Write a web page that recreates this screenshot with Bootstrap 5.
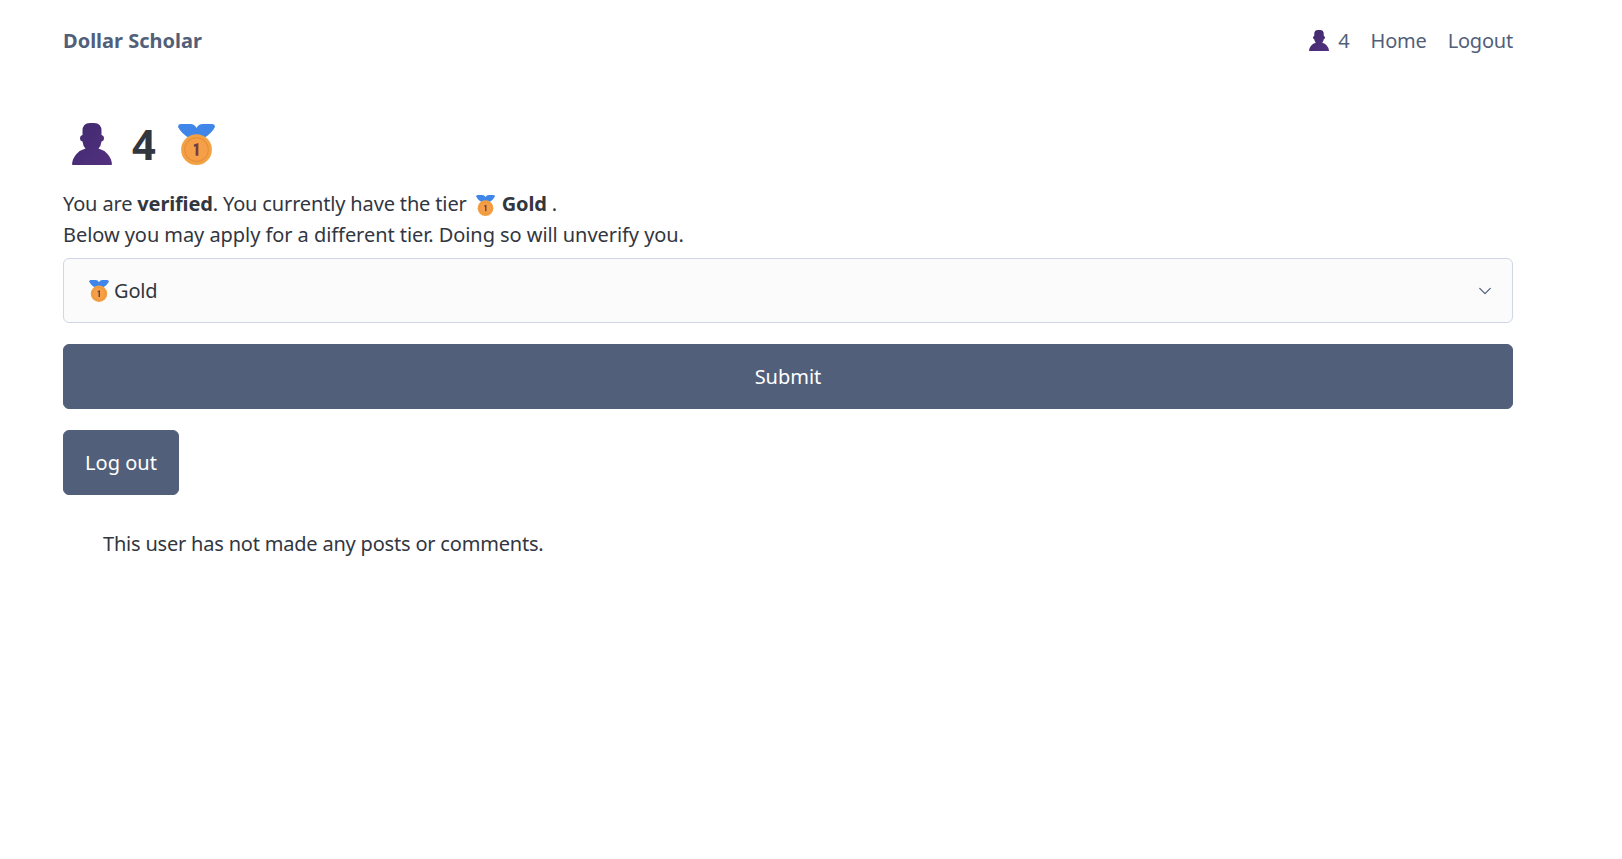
<!DOCTYPE html>
<html lang="en">

<head>
    <meta charset="UTF-8">
    <meta name="viewport" content="width=device-width, initial-scale=1">
    <title>Dollar Scholar</title>
    <link href="https://cdn.jsdelivr.net/npm/bootstrap@5.3.3/dist/css/bootstrap.min.css" rel="stylesheet">
    <style>
        body {
            font-family: "Noto Sans", "Liberation Sans", sans-serif;
            font-size: 20px;
            line-height: 31.2px;
            letter-spacing: -0.15px;
            color: #32363f;
        }

        .svg-defs {
            position: absolute;
        }

        .page-wrap {
            width: 1450px;
            margin-left: 63px;
        }

        .top-bar {
            height: 82px;
        }

        .brand-link {
            font-weight: 700;
            letter-spacing: 0;
            color: #525f7a;
            text-decoration: none;
        }

        .top-link {
            color: #525f7a;
            text-decoration: none;
            letter-spacing: -0.2px;
        }

        .top-links {
            gap: 21px;
        }

        .bust-count {
            gap: 9px;
        }

        .user-title {
            font-size: 41.6px;
            font-weight: 700;
            line-height: 50px;
            letter-spacing: 0;
            margin-top: 37px;
            margin-bottom: 19px;
        }

        .title-bust {
            margin-left: 9px;
            margin-right: 20px;
        }

        .title-medal {
            margin-left: 22px;
        }

        .inline-medal {
            margin: 0 2px 0 4px;
            vertical-align: -5px;
        }

        .apply-line {
            letter-spacing: -0.06px;
        }

        .tier-select {
            height: 65px;
            font-size: 20px;
            color: #32363f;
            background-color: #fbfbfb;
            border-color: #cfd6e6;
            border-radius: 6px;
            padding: 0 22px 0 25px;
            display: flex;
            align-items: center;
            gap: 5px;
            background-image: url("data:image/svg+xml,%3csvg xmlns='http://www.w3.org/2000/svg' viewBox='0 0 16 16'%3e%3cpath fill='none' stroke='%23525f7a' stroke-linecap='round' stroke-linejoin='round' stroke-width='1.5' d='m2 5 6 6 6-6'/%3e%3c/svg%3e");
            background-position: right 20px center;
            background-size: 14px 14px;
        }

        .slate-btn {
            background-color: #525f7a;
            border-color: #525f7a;
            color: #fff;
            font-size: 20px;
            height: 65px;
            border-radius: 6px;
            margin-top: 21px;
        }

        .logout-btn {
            width: 116px;
        }

        .no-posts {
            padding-left: 40px;
            margin-top: 33px;
            letter-spacing: -0.2px;
        }
    </style>
</head>

<body>

    <svg width="0" height="0" class="svg-defs">
        <defs>
            <linearGradient id="bustFill" x1="0" y1="0" x2="1" y2="1">
                <stop offset="0" stop-color="#3f2a6e" />
                <stop offset="1" stop-color="#53307f" />
            </linearGradient>
        </defs>
        <symbol id="bust" viewBox="0 0 40 42">
            <path fill="url(#bustFill)"
                d="M10.5 8 Q10.5 0 18 0 H22 Q29.5 0 29.5 8 V12 Q32 12.5 32 15 Q32 18 29.5 18.5 Q29 23 26.5 25.5 Q32 27 35.5 31 Q39.5 35.5 40 41 Q40 42 39 42 H1 Q0 42 0 41 Q0.5 35.5 4.5 31 Q8 27 13.5 25.5 Q11 23 10.5 18.5 Q8 18 8 15 Q8 12.5 10.5 12 Z" />
        </symbol>
        <symbol id="medal" viewBox="0 0 36 40">
            <path fill="#3f86e8"
                d="M3 0 H12 Q16 0 18 4 Q20 0 24 0 H33 Q36 0 36 3 Q33 9 25 14 L18 13 L11 14 Q3 9 0 3 Q0 0 3 0 Z" />
            <circle cx="18" cy="25" r="15" fill="#f2a144" />
            <circle cx="18" cy="25" r="11.5" fill="#f59f48" stroke="#e58f35" stroke-width="1" />
            <path fill="#6e4040" d="M15.5 20 L19.8 18.5 V31 H17.2 V21.8 L15.5 22.4 Z" />
        </symbol>
    </svg>

    <div class="page-wrap">
        <nav class="top-bar d-flex justify-content-between align-items-center">
            <a href="#" class="brand-link">Dollar Scholar</a>
            <div class="top-links d-flex align-items-center">
                <a href="#" class="top-link bust-count d-flex align-items-center">
                    <svg width="20" height="21">
                        <use href="#bust" />
                    </svg>
                    <span>4</span>
                </a>
                <a href="#" class="top-link">Home</a>
                <a href="#" class="top-link">Logout</a>
            </div>
        </nav>

        <h1 class="user-title d-flex align-items-center">
            <svg width="40" height="42" class="title-bust">
                <use href="#bust" />
            </svg>
            <span>4</span>
            <svg width="37" height="41" class="title-medal">
                <use href="#medal" />
            </svg>
        </h1>

        <div>You are <b>verified</b>. You currently have the tier
            <svg width="19" height="21" class="inline-medal">
                <use href="#medal" />
            </svg>
            <b>Gold</b> .
        </div>
        <div class="apply-line mb-2">Below you may apply for a different tier. Doing so will unverify you.</div>

        <div class="form-select tier-select">
            <svg width="20" height="22">
                <use href="#medal" />
            </svg>
            <span>Gold</span>
        </div>
        <button type="button" class="btn slate-btn w-100 d-block">Submit</button>
        <button type="button" class="btn slate-btn logout-btn d-block">Log out</button>

        <p class="no-posts">This user has not made any posts or comments.</p>
    </div>

</body>

</html>
